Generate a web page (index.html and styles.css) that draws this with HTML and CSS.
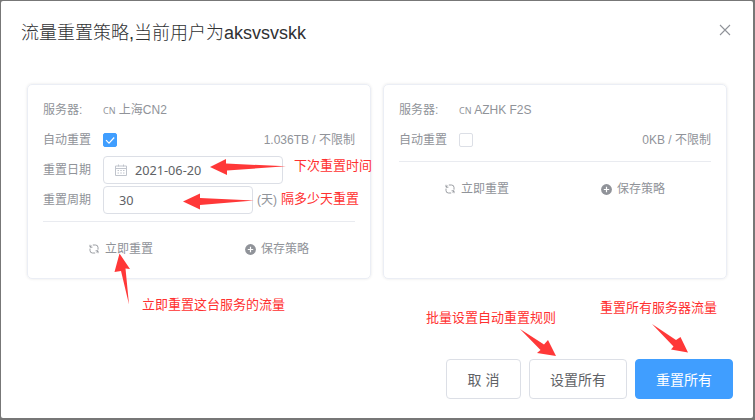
FILE: index.html
```html
<!DOCTYPE html>
<html lang="zh-CN">
<head>
<meta charset="utf-8">
<title>流量重置策略</title>
<link rel="stylesheet" href="styles.css">
</head>
<body>
<svg class="defs" width="0" height="0" aria-hidden="true">
  <symbol id="refresh" viewBox="0 0 10 10"><path d="M1 .8v2.400h2.400M3.800 1h2.700a2.500 2.500 0 0 1 2.500 2.500v2.200M9 9.200V6.800H6.600M6.200 9H3.500A2.500 2.500 0 0 1 1 6.500V4.600M1.200 3l1.200-1.400M8.800 7L7.600 8.400" fill="none" stroke="currentColor" stroke-width=".9"/></symbol>
  <symbol id="plus" viewBox="0 0 11 11"><circle cx="5.5" cy="5.5" r="5.4" fill="currentColor"/><path d="M5.5 2.8v5.4M2.8 5.5h5.4" stroke="#fff" stroke-width="1.2"/></symbol>
</svg>
<main class="dialog">
  <header class="header">
    <h1 class="title">流量重置策略,当前用户为aksvsvskk</h1>
    <svg class="close" viewBox="0 0 12 12"><path d="M1 1l10 10M11 1L1 11" fill="none" stroke="#909399" stroke-width="1.1"/></svg>
  </header>
  <div class="cards">
    <section class="card">
      <div class="row"><span class="label">服务器:</span><span><small class="flag">CN</small> 上海CN2</span></div>
      <div class="row"><span class="label">自动重置</span><span class="check checked"><svg viewBox="0 0 14 14"><path d="M3 7.1l3 3 5.2-5.6" fill="none" stroke="#fff" stroke-width="1.2"/></svg></span><span class="usage">1.036TB / 不限制</span></div>
      <div class="row"><span class="label">重置日期</span><span class="input date"><svg class="calendar" viewBox="0 0 12 12"><path d="M.5 2h11v9.500H.5zM.5 4.500h11M3.500.5v2M8.500.5v2M2.500 6.500h1.500M5.300 6.500h1.500M8 6.500h1.500M2.500 9h1.500M5.300 9h1.500M8 9h1.500" fill="none" stroke="#c0c4cc"/></svg>2021-06-20</span></div>
      <div class="row"><span class="label">重置周期</span><span class="input days">30</span><span class="unit">(天)</span></div>
      <div class="actions"><span class="action"><svg class="refresh"><use href="#refresh"/></svg>立即重置</span><span class="action"><svg class="plus"><use href="#plus"/></svg>保存策略</span></div>
    </section>
    <section class="card">
      <div class="row"><span class="label">服务器:</span><span><small class="flag">CN</small> AZHK F2S</span></div>
      <div class="row"><span class="label">自动重置</span><span class="check"></span><span class="usage">0KB / 不限制</span></div>
      <div class="actions"><span class="action"><svg class="refresh"><use href="#refresh"/></svg>立即重置</span><span class="action"><svg class="plus"><use href="#plus"/></svg>保存策略</span></div>
    </section>
  </div>
  <footer class="footer">
    <button class="btn cancel">取 消</button>
    <button class="btn">设置所有</button>
    <button class="btn primary">重置所有</button>
  </footer>
</main>
<svg class="arrows" viewBox="0 0 755 420">
  <path d="M210 167l16-8v4.500l60 2.800-59 4.200v4.500zM183 201.500l17-8v4.500l54 2.500-54 4.500v4.500zM119.500 253.500l10.500 15.500-4.500-.5 3.500 36-8-33.500-6.500 1zM520 329l24 15.500 4-4.500 8 16-19-3 3.500-3zM652 324l24 16 4.500-3 7.500 15.500-17-3 2.500-3z"/>
</svg>
<span class="note note-date">下次重置时间</span>
<span class="note note-period">隔多少天重置</span>
<span class="note note-reset">立即重置这台服务的流量</span>
<span class="note note-batch">批量设置自动重置规则</span>
<span class="note note-all">重置所有服务器流量</span>
</body>
</html>
```
FILE: styles.css
```css
* { box-sizing: border-box; }
body {
  margin: 0;
  height: 420px;
  padding: 1px 2px 2px 1px;
  overflow: hidden;
  background: #777;
  font: 12px/20px "Liberation Sans", "Noto Sans CJK SC", sans-serif;
  color: #909399;
}
.defs { position: absolute; }
.dialog { height: 417px; background: #fff; border-radius: 2px; }
.header { display: flex; justify-content: space-between; height: 83px; padding: 20px 22px 0 20px; }
.title { margin: 0; font-size: 18px; line-height: 24px; font-weight: 300; color: #303133; }
.close { width: 12px; height: 12px; margin-top: 3px; }
.cards { display: flex; gap: 12px; padding-left: 26px; }
.card {
  width: 344px;
  height: 195px;
  padding: 10px 15px 0;
  border: 1px solid #ebeef5;
  border-radius: 5px;
  box-shadow: 0 0 3px rgba(0, 0, 0, .1);
}
.row { display: flex; align-items: center; height: 30px; }
.label { width: 60px; }
.flag { font: 9px "Noto Sans", sans-serif; }
.check { width: 14px; height: 14px; border: 1px solid #dcdfe6; border-radius: 2px; }
.checked { background: #409eff; border-color: #409eff; }
.checked svg { display: block; margin: -1px; width: 14px; height: 14px; }
.usage { margin-left: auto; }
.input {
  display: flex;
  align-items: center;
  height: 28px;
  border: 1px solid #dcdfe6;
  border-radius: 4px;
  color: #606266;
  font: 12.7px "Noto Sans", sans-serif;
}
.date { width: 180px; padding-left: 11px; }
.calendar { width: 12px; height: 12px; margin-right: 8px; }
.days { width: 150px; padding-left: 15px; }
.unit { margin-left: 4px; }
.actions { display: grid; grid-template-columns: 1fr 1fr; height: 55px; margin-top: 6px; border-top: 1px solid #e9ebf0; }
.action { display: flex; align-items: center; justify-content: center; }
.refresh { width: 10px; height: 10px; margin-right: 6px; }
.plus { width: 11px; height: 11px; margin-right: 5px; }
.footer { display: flex; justify-content: flex-end; gap: 8px; padding: 80px 20px 0 0; }
.btn {
  width: 98px;
  height: 40px;
  padding: 0;
  border: 1px solid #dcdfe6;
  border-radius: 4px;
  background: #fff;
  color: #606266;
  font: 14px "Liberation Sans", "Noto Sans CJK SC", sans-serif;
}
.cancel { width: 75px; }
.primary { background: #409eff; border-color: #409eff; color: #fff; }
.arrows { position: absolute; top: 0; left: 0; width: 755px; height: 420px; fill: #ff3838; }
.note { position: absolute; font-size: 13px; line-height: 20px; color: #ff3030; white-space: nowrap; }
.note-date { left: 294px; top: 156px; }
.note-period { left: 281px; top: 189px; }
.note-reset { left: 142px; top: 295px; }
.note-batch { left: 426px; top: 308px; }
.note-all { left: 600px; top: 298px; }
```
